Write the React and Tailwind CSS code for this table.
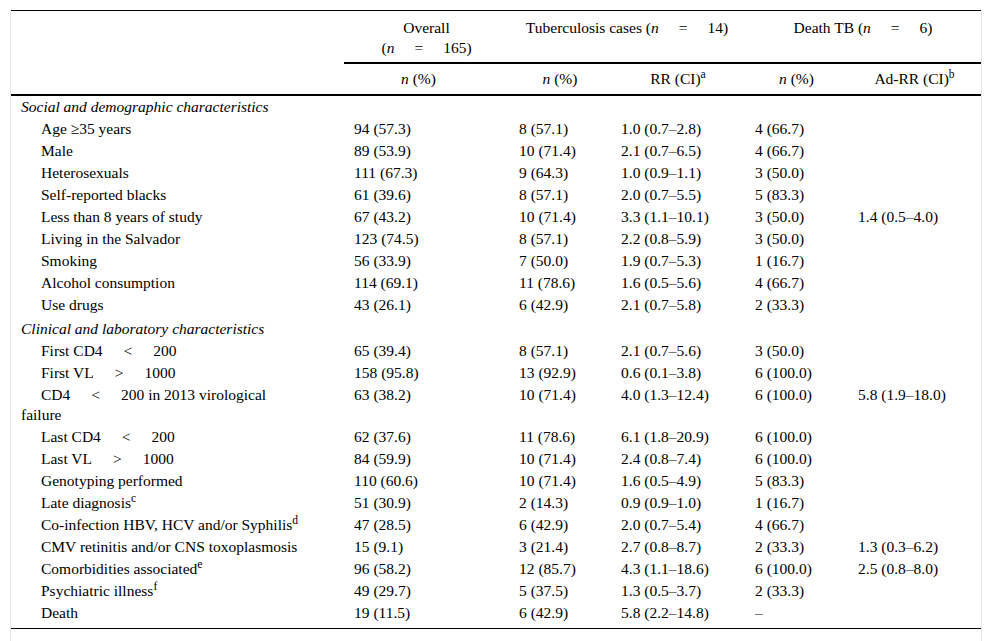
import React from 'react';

const Op = ({ children, wide }) => (
  <span className={wide ? 'inline-block indent-0 mx-[20px]' : 'inline-block indent-0 mx-[21px]'}>{children}</span>
);

const N = ({ value }) => (
  <>(<i>n</i><Op wide>=</Op>{value})</>
);

const social = [
  ['Age ≥35 years', '94 (57.3)', '8 (57.1)', '1.0 (0.7–2.8)', '4 (66.7)', ''],
  ['Male', '89 (53.9)', '10 (71.4)', '2.1 (0.7–6.5)', '4 (66.7)', ''],
  ['Heterosexuals', '111 (67.3)', '9 (64.3)', '1.0 (0.9–1.1)', '3 (50.0)', ''],
  ['Self-reported blacks', '61 (39.6)', '8 (57.1)', '2.0 (0.7–5.5)', '5 (83.3)', ''],
  ['Less than 8 years of study', '67 (43.2)', '10 (71.4)', '3.3 (1.1–10.1)', '3 (50.0)', '1.4 (0.5–4.0)'],
  ['Living in the Salvador', '123 (74.5)', '8 (57.1)', '2.2 (0.8–5.9)', '3 (50.0)', ''],
  ['Smoking', '56 (33.9)', '7 (50.0)', '1.9 (0.7–5.3)', '1 (16.7)', ''],
  ['Alcohol consumption', '114 (69.1)', '11 (78.6)', '1.6 (0.5–5.6)', '4 (66.7)', ''],
  ['Use drugs', '43 (26.1)', '6 (42.9)', '2.1 (0.7–5.8)', '2 (33.3)', ''],
];

const clinical = [
  [<>First CD4<Op>&lt;</Op>200</>, '65 (39.4)', '8 (57.1)', '2.1 (0.7–5.6)', '3 (50.0)', ''],
  [<>First VL<Op>&gt;</Op>1000</>, '158 (95.8)', '13 (92.9)', '0.6 (0.1–3.8)', '6 (100.0)', ''],
  [<>CD4<Op>&lt;</Op>200 in 2013 virological<br />failure</>, '63 (38.2)', '10 (71.4)', '4.0 (1.3–12.4)', '6 (100.0)', '5.8 (1.9–18.0)'],
  [<>Last CD4<Op>&lt;</Op>200</>, '62 (37.6)', '11 (78.6)', '6.1 (1.8–20.9)', '6 (100.0)', ''],
  [<>Last VL<Op>&gt;</Op>1000</>, '84 (59.9)', '10 (71.4)', '2.4 (0.8–7.4)', '6 (100.0)', ''],
  ['Genotyping performed', '110 (60.6)', '10 (71.4)', '1.6 (0.5–4.9)', '5 (83.3)', ''],
  [<>Late diagnosis<sup>c</sup></>, '51 (30.9)', '2 (14.3)', '0.9 (0.9–1.0)', '1 (16.7)', ''],
  [<>Co-infection HBV, HCV and/or Syphilis<sup>d</sup></>, '47 (28.5)', '6 (42.9)', '2.0 (0.7–5.4)', '4 (66.7)', ''],
  ['CMV retinitis and/or CNS toxoplasmosis', '15 (9.1)', '3 (21.4)', '2.7 (0.8–8.7)', '2 (33.3)', '1.3 (0.3–6.2)'],
  [<>Comorbidities associated<sup>e</sup></>, '96 (58.2)', '12 (85.7)', '4.3 (1.1–18.6)', '6 (100.0)', '2.5 (0.8–8.0)'],
  [<>Psychiatric illness<sup>f</sup></>, '49 (29.7)', '5 (37.5)', '1.3 (0.5–3.7)', '2 (33.3)', ''],
  ['Death', '19 (11.5)', '6 (42.9)', '5.8 (2.2–14.8)', '–', ''],
];

function Row({ row, last }) {
  const pad = last ? 'pt-[1px] pb-[5px]' : 'py-[1px]';
  return (
    <tr className="align-top">
      <td className={`pl-[10px] indent-[20px] ${pad}`}>{row[0]}</td>
      {row.slice(1).map((v, i) => (
        <td key={i} className={`pl-[10px] ${pad}`}>{v}</td>
      ))}
    </tr>
  );
}

function Section({ title }) {
  return (
    <tr>
      <td colSpan={6} className="pl-[10px] pt-[1px] pb-[1px] italic">{title}</td>
    </tr>
  );
}

export default function App() {
  return (
    <div className="w-[992px] h-[641px] bg-white pt-[10px] px-[10px] font-['Liberation_Serif',serif] text-[15.5px] leading-[20px] text-black">
      <div className="w-[972px] border-x border-[#e6e6e6] pb-[12px]">
        <table className="w-[970px] table-fixed border-t border-black">
          <colgroup>
            <col className="w-[333px]" />
            <col className="w-[165px]" />
            <col className="w-[102px]" />
            <col className="w-[134px]" />
            <col className="w-[103px]" />
            <col className="w-[133px]" />
          </colgroup>
          <thead>
            <tr className="h-[52px] align-top">
              <th className="font-normal"></th>
              <th className="font-normal text-center pt-[7px] border-b-2 border-black">
                Overall<br /><N value="165" />
              </th>
              <th colSpan={2} className="font-normal text-center pt-[7px] border-b-2 border-black">
                Tuberculosis cases <N value="14" />
              </th>
              <th colSpan={2} className="font-normal text-center pt-[7px] border-b-2 border-black">
                Death TB <N value="6" />
              </th>
            </tr>
            <tr className="h-[32px] border-b-2 border-black">
              <th className="font-normal"></th>
              <th className="font-normal text-center pr-[16px]"><i>n</i> (%)</th>
              <th className="font-normal text-center"><i>n</i> (%)</th>
              <th className="font-normal text-center">RR (CI)<sup>a</sup></th>
              <th className="font-normal text-center"><i>n</i> (%)</th>
              <th className="font-normal text-center">Ad-RR (CI)<sup>b</sup></th>
            </tr>
          </thead>
          <tbody className="border-b border-black">
            <Section title="Social and demographic characteristics" />
            {social.map((r, i) => <Row key={i} row={r} />)}
            <tr><td colSpan={6} className="h-[2px] p-0"></td></tr>
            <Section title="Clinical and laboratory characteristics" />
            {clinical.map((r, i) => <Row key={i} row={r} last={i === clinical.length - 1} />)}
          </tbody>
        </table>
      </div>
    </div>
  );
}
